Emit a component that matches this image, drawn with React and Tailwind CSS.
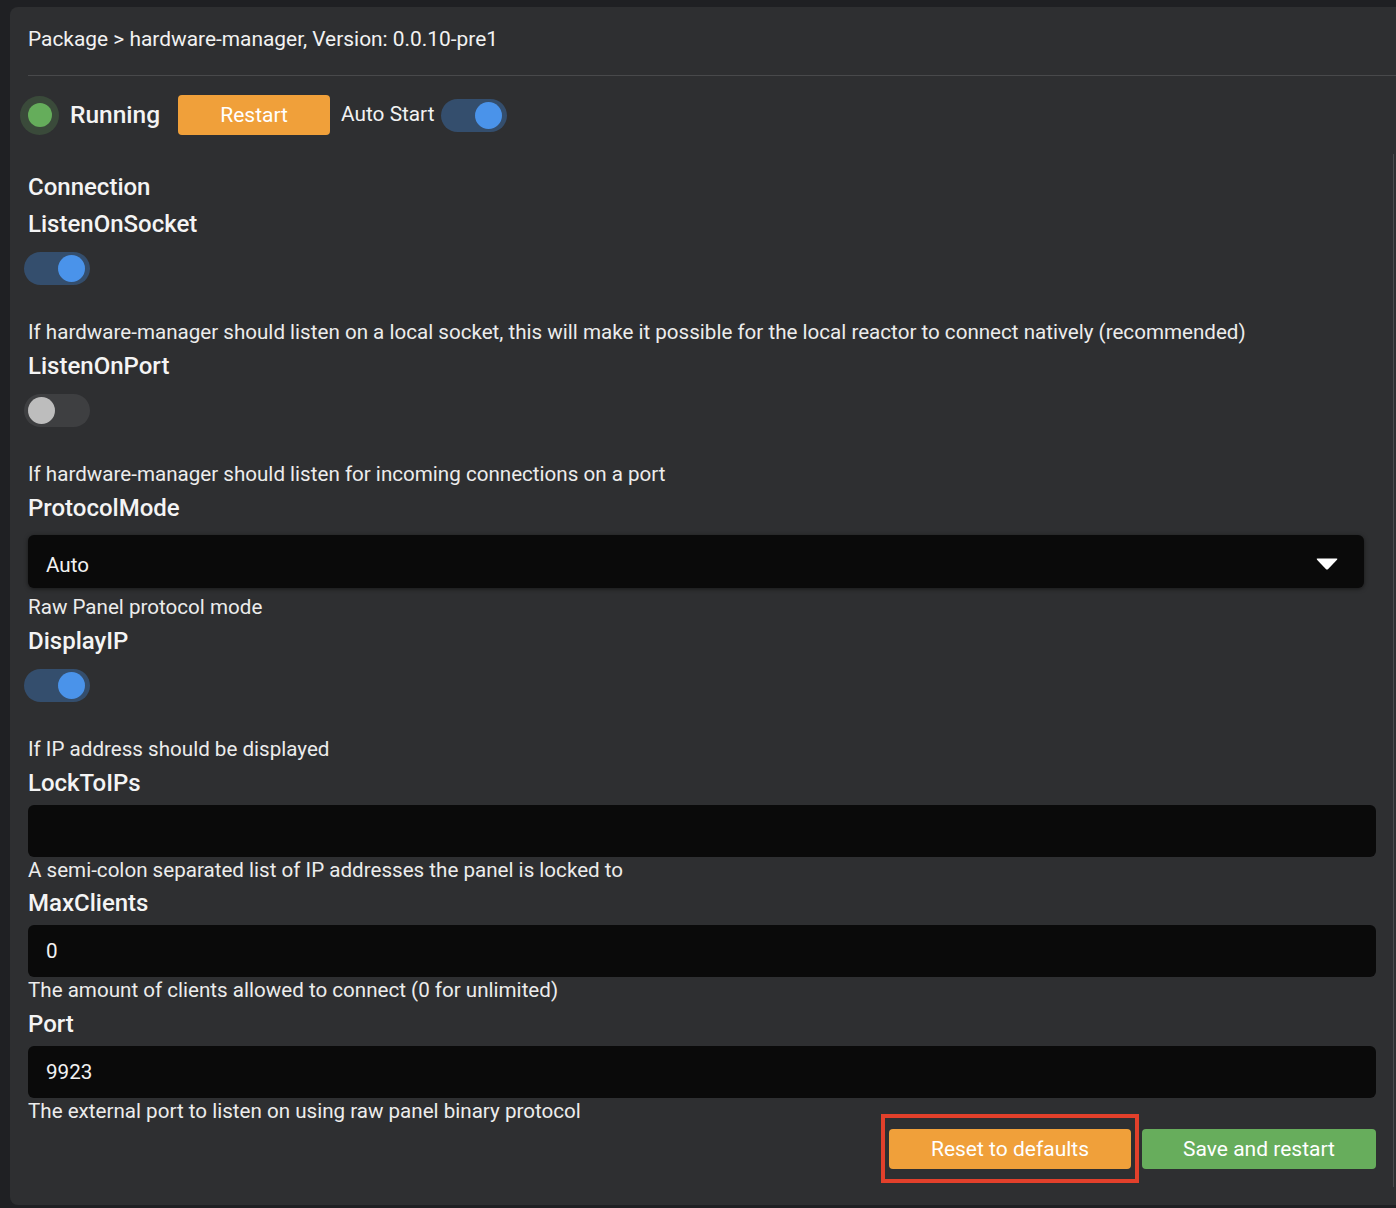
import React from "react";

function Toggle({ on }) {
  return (
    <div
      className={`relative w-[66px] h-[33px] rounded-full shrink-0 ${
        on ? "bg-[#344e6d]" : "bg-[#3e3f41]"
      }`}
    >
      <div
        className={`absolute top-[3px] w-[27px] h-[27px] rounded-full ${
          on ? "right-[5px] bg-[#4a93ea]" : "left-[4px] bg-[#bdbdbd]"
        }`}
      />
    </div>
  );
}

function Heading({ children, className = "" }) {
  return (
    <div className={`text-[24px] leading-[36px] font-medium text-[#f4f4f4] ${className}`}>
      {children}
    </div>
  );
}

function Desc({ children, className = "" }) {
  return (
    <div className={`text-[20.6px] text-[#ececec] ${className}`}>{children}</div>
  );
}

function TextInput({ value, className = "" }) {
  return (
    <div
      className={`h-[52px] rounded-[6px] bg-[#0a0a0a] flex items-center pl-[18px] text-[20.6px] text-[#f2f2f2] ${className}`}
    >
      {value}
    </div>
  );
}

export default function App() {
  return (
    <div className="w-[1396px] h-[1208px] bg-[#1f2023] pl-[10px] pt-[7px] overflow-hidden font-['Roboto',sans-serif]">
      <div className="relative h-[1198px] bg-[#2e2f31] rounded-l-[8px] pl-[18px] pr-[20px] pt-[18px] flex flex-col">
        {/* scrollbar hint */}
        <div className="absolute right-[2px] top-[147px] w-[1px] h-[1033px] bg-[#4a4b4d]" />

        <div className="text-[20.9px] leading-[28px] text-[#f2f2f2]">
          Package &gt; hardware-manager, Version: 0.0.10-pre1
        </div>
        <div className="mt-[22px] -mr-[20px] h-[1px] bg-[#48494b]" />

        {/* status row */}
        <div className="mt-[19px] h-[40px] flex items-center">
          <div className="-ml-[8px] w-[39px] h-[39px] rounded-full bg-[#3a4a3a] flex items-center justify-center shrink-0">
            <div className="w-[24px] h-[24px] rounded-full bg-[#65ad5b]" />
          </div>
          <div className="ml-[11px] text-[24.5px] font-medium text-[#f4f4f4]">Running</div>
          <button className="ml-[18px] w-[152px] h-[40px] pt-[2px] rounded-[4px] bg-[#f0a03a] text-white text-[21px]">
            Restart
          </button>
          <div className="ml-[11px] text-[20.8px] text-[#f2f2f2]">Auto Start</div>
          <div className="ml-[7px]">
            <Toggle on />
          </div>
        </div>

        <Heading className="mt-[34px]">Connection</Heading>
        <Heading className="mt-[1px]">ListenOnSocket</Heading>
        <div className="mt-[10px] -ml-[4px]">
          <Toggle on />
        </div>
        <Desc className="mt-[33px] leading-[28px]">
          If hardware-manager should listen on a local socket, this will make it possible for the local reactor to connect natively (recommended)
        </Desc>

        <Heading className="mt-[2px]">ListenOnPort</Heading>
        <div className="mt-[10px] -ml-[4px]">
          <Toggle on={false} />
        </div>
        <Desc className="mt-[33px] leading-[28px]">
          If hardware-manager should listen for incoming connections on a port
        </Desc>

        <Heading className="mt-[2px]">ProtocolMode</Heading>
        <div className="mt-[9px] mr-[12px] h-[53px] rounded-[6px] bg-[#0a0a0a] shadow-[0_1px_4px_rgba(0,0,0,0.5)] flex items-center justify-between pt-[7px] pl-[18px] pr-[25px] text-[20.6px] text-[#f2f2f2]">
          <span>Auto</span>
          <svg width="24" height="14" viewBox="0 0 24 14" className="-mt-[2px]">
            <path d="M2.5 1.5 H21.5 Q23 1.5 22 2.8 L13.2 12 Q12 13.2 10.8 12 L2 2.8 Q1 1.5 2.5 1.5 Z" fill="#ffffff" />
          </svg>
        </div>
        <Desc className="mt-[5px] leading-[28px]">Raw Panel protocol mode</Desc>

        <Heading className="mt-[2px]">DisplayIP</Heading>
        <div className="mt-[10px] -ml-[4px]">
          <Toggle on />
        </div>
        <Desc className="mt-[33px] leading-[28px]">If IP address should be displayed</Desc>

        <Heading className="mt-[2px]">LockToIPs</Heading>
        <TextInput value="" className="mt-[4px]" />
        <Desc className="leading-[26px]">
          A semi-colon separated list of IP addresses the panel is locked to
        </Desc>

        <Heading className="mt-[2px]">MaxClients</Heading>
        <TextInput value="0" className="mt-[4px]" />
        <Desc className="leading-[26px]">
          The amount of clients allowed to connect (0 for unlimited)
        </Desc>

        <Heading className="mt-[3px]">Port</Heading>
        <TextInput value="9923" className="mt-[4px]" />
        <Desc className="leading-[26px]">
          The external port to listen on using raw panel binary protocol
        </Desc>

        <div className="mt-[5px] flex justify-end gap-[11px]">
          <div className="relative">
            <button className="w-[242px] h-[40px] pt-[1px] rounded-[4px] bg-[#f0a03a] text-white text-[21px]">
              Reset to defaults
            </button>
            <div className="absolute -left-[8px] -right-[8px] -top-[15px] -bottom-[14px] border-[4px] border-[#e2402b] pointer-events-none" />
          </div>
          <button className="w-[234px] h-[40px] pt-[1px] rounded-[4px] bg-[#67ad5c] text-white text-[21px]">
            Save and restart
          </button>
        </div>
      </div>
    </div>
  );
}
